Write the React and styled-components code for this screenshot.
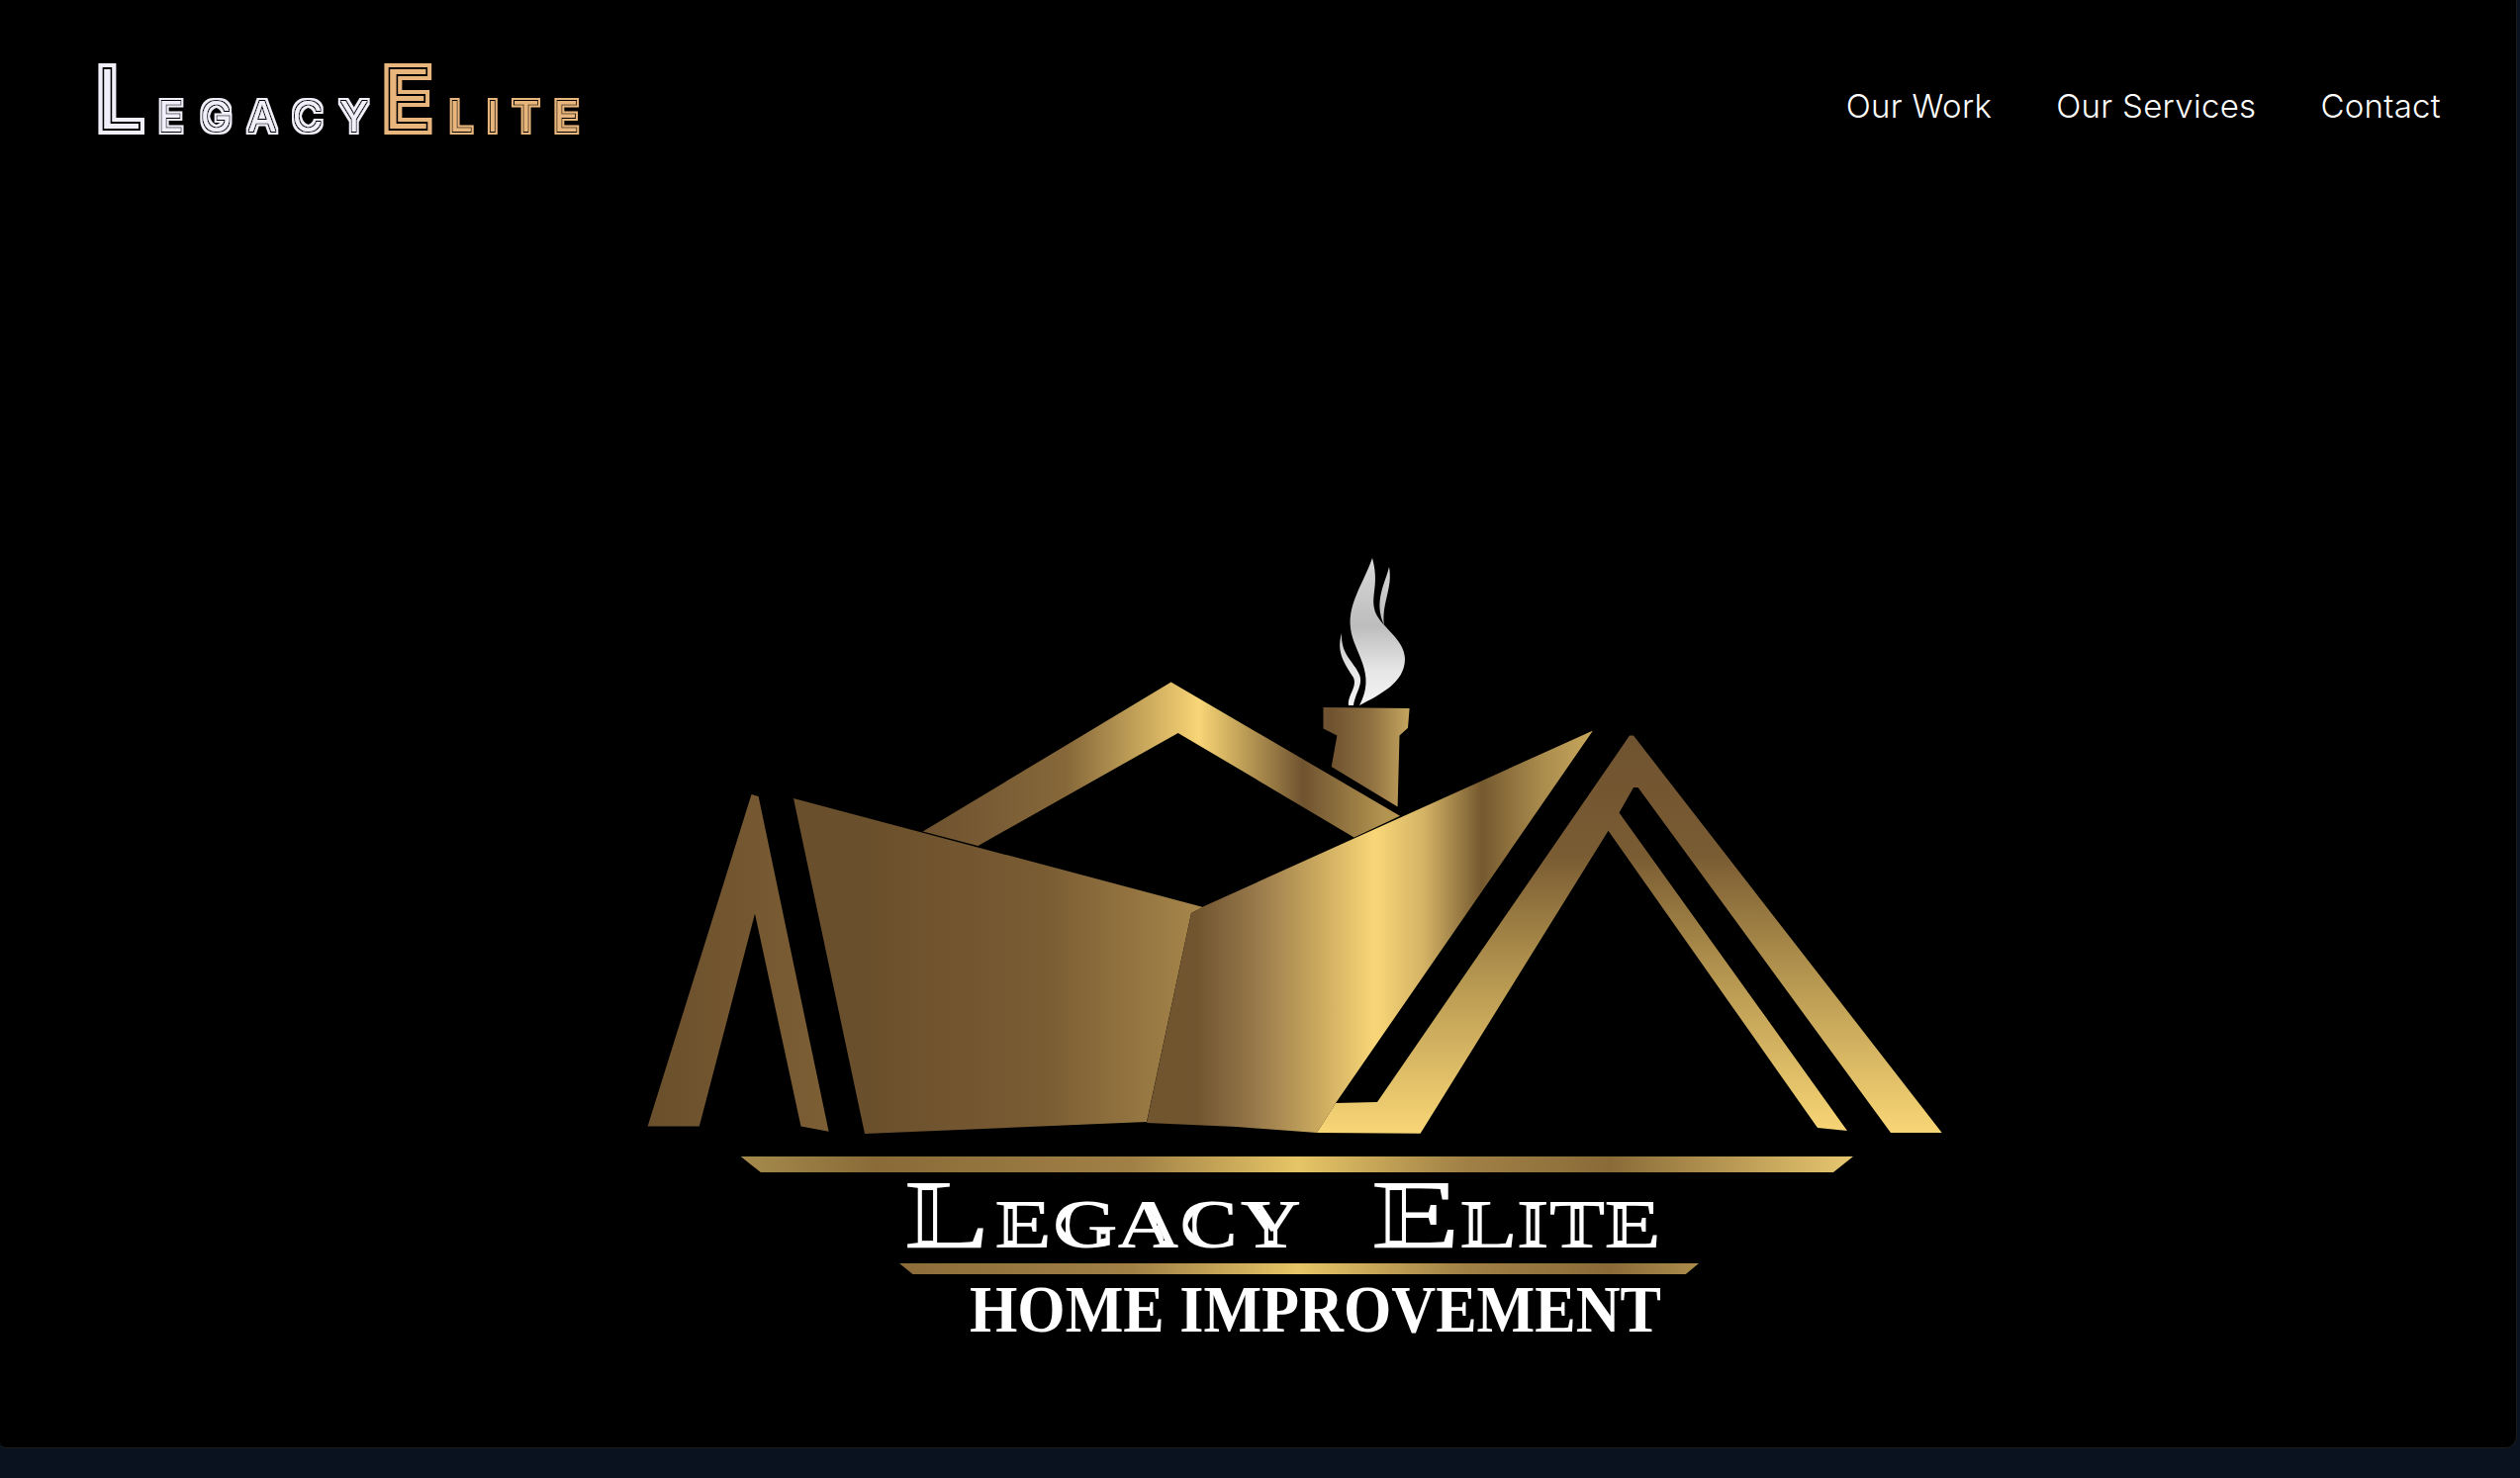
import styled, { createGlobalStyle } from "styled-components";

const GlobalStyle = createGlobalStyle`
  * { box-sizing: border-box; }
  html, body { margin: 0; padding: 0; background: #0a1220; }
`;

const Page = styled.div`
  width: 2547px;
  height: 1494px;
  overflow: hidden;
  background: #0a1220;
`;

const Hero = styled.section`
  width: 2544px;
  height: 1464px;
  background: #000;
  border-right: 1px solid #1c1c1c;
  border-bottom: 1px solid #1c1c1c;
  border-radius: 0 0 12px 6px;
  display: flex;
  flex-direction: column;
`;

const Header = styled.header`
  height: 160px;
  padding: 25px 76px 0 90px;
  display: flex;
  justify-content: space-between;
  align-items: flex-start;
`;

const Nav = styled.nav`
  display: flex;
  gap: 65px;
  padding-top: 58px;
`;

const NavLink = styled.a`
  font-family: Inter, "Noto Sans", sans-serif;
  font-weight: 300;
  font-size: 33px;
  line-height: 48px;
  letter-spacing: 0.3px;
  color: #fff;
  text-decoration: none;
`;

const BrandSvg = styled.svg`
  display: block;
  width: 510px;
  height: 120px;
`;

const Main = styled.main`
  padding: 390px 0 0 640px;
`;

const HouseSvg = styled.svg`
  display: block;
  width: 1340px;
  height: 820px;
`;

const BrandWord = styled.text`
  font-family: Inter, "Liberation Sans", sans-serif;
  font-weight: 400;
  font-size: ${(p) => p.$size}px;
  fill: ${(p) => p.$color};
`;

const LogoLine = styled.text`
  font-family: "Liberation Serif", serif;
  font-weight: 700;
  fill: #fff;
`;

function Stripes({ id, erode, outer, inner }) {
  return (
    <filter id={id} filterUnits="userSpaceOnUse" x="90" y="25" width="510" height="120">
      <feMorphology in="SourceGraphic" operator="erode" radius={erode} result="core" />
      <feMorphology in="core" operator="dilate" radius={outer} result="outer" />
      <feMorphology in="core" operator="dilate" radius={inner} result="innerShape" />
      <feFlood floodColor="#000" result="black" />
      <feComposite in="black" in2="innerShape" operator="in" result="gap" />
      <feMerge>
        <feMergeNode in="outer" />
        <feMergeNode in="gap" />
        <feMergeNode in="core" />
      </feMerge>
    </filter>
  );
}

function Brand() {
  return (
    <BrandSvg viewBox="90 25 510 120" aria-label="Legacy Elite">
      <defs>
        <Stripes id="stripeBig" erode={1} outer={6} inner={2} />
        <Stripes id="stripeSmall" erode={0} outer={3} inner={1} />
      </defs>
      <BrandWord x="97" y="130.7" $size={85} $color="#f1f0fa" filter="url(#stripeBig)">L</BrandWord>
      <BrandWord x="160" y="132.7" $size={42} $color="#f1f0fa" filter="url(#stripeSmall)" textLength="212" lengthAdjust="spacing">EGACY</BrandWord>
      <BrandWord x="386" y="130.7" $size={85} $color="#e8b67c" filter="url(#stripeBig)">E</BrandWord>
      <BrandWord x="454" y="132.7" $size={42} $color="#e8b67c" filter="url(#stripeSmall)" textLength="131" lengthAdjust="spacing">LITE</BrandWord>
    </BrandSvg>
  );
}

function Gradient({ id, x1, x2, y1 = 0, y2 = 0, stops }) {
  return (
    <linearGradient id={id} gradientUnits="userSpaceOnUse" x1={x1} x2={x2} y1={y1} y2={y2}>
      {stops.map(([at, color]) => (
        <stop key={at} offset={at} stopColor={color} />
      ))}
    </linearGradient>
  );
}

function House() {
  return (
    <HouseSvg viewBox="640 550 1340 820" aria-label="Legacy Elite Home Improvement">
      <defs>
        <Gradient id="leftPost" x1={654} x2={840} stops={[[0, "#6a4f2c"], [1, "#7d5f35"]]} />
        <Gradient id="leftWall" x1={870} x2={1205} stops={[[0, "#6a4f2c"], [0.55, "#7a5c33"], [1, "#a48449"]]} />
        <Gradient
          id="roofBand"
          x1={940}
          x2={1400}
          stops={[[0, "#6f5330"], [0.3, "#86683a"], [0.55, "#e8c56c"], [0.59, "#f8d577"], [0.67, "#c9a95c"], [0.82, "#6f5330"], [1, "#b49550"]]}
        />
        <Gradient
          id="rightWall"
          x1={1160}
          x2={1610}
          stops={[[0, "#70552f"], [0.11, "#705530"], [0.24, "#97784a"], [0.38, "#c9a85e"], [0.51, "#f9d778"], [0.62, "#d4b366"], [0.75, "#75592f"], [0.88, "#a88a4c"], [1, "#c8a85c"]]}
        />
        <Gradient id="rightRoof" x1={1650} x2={1650} y1={745} y2={1145} stops={[[0, "#6f5330"], [0.3, "#7a5c33"], [0.6, "#b4954f"], [1, "#f8d676"]]} />
        <Gradient id="chimney" x1={1345} x2={1425} stops={[[0, "#6f5330"], [0.5, "#8f7040"], [1, "#c6a65f"]]} />
        <Gradient id="bar" x1={750} x2={1875} stops={[[0, "#a58a4c"], [0.12, "#8a6b38"], [0.35, "#a08045"], [0.5, "#e6c566"], [0.65, "#a08045"], [0.78, "#8a6b38"], [1, "#e8c870"]]} />
        <Gradient id="smoke" x1={1380} x2={1380} y1={565} y2={715} stops={[[0, "#d8d8d8"], [0.45, "#bdbdbd"], [0.75, "#e6e6e6"], [1, "#f4f4f4"]]} />
        <filter id="inlineCut" filterUnits="userSpaceOnUse" x="900" y="1180" width="800" height="95">
          <feMorphology in="SourceAlpha" operator="erode" radius="4 7" result="slit" />
          <feFlood floodColor="#000" result="black" />
          <feComposite in="black" in2="slit" operator="in" result="cut" />
          <feMerge>
            <feMergeNode in="SourceGraphic" />
            <feMergeNode in="cut" />
          </feMerge>
        </filter>
      </defs>

      <polygon
        fill="url(#leftPost)"
        points="759.5,803 766.6,805 837.6,1143.8 809.5,1138.6 763,923.5 706.8,1138.6 654.6,1138.6"
      />
      <polygon fill="url(#leftWall)" points="802,807 1216,917 1204,923 1159,1134 874,1146" />
      <polygon
        fill="url(#roofBand)"
        points="932.7,840.5 1183.6,689.5 1415,824.7 1368.6,846.4 1190.7,740.9 988.5,855"
      />
      <polygon
        fill="url(#rightWall)"
        points="1217,916 1610,738.5 1350,1115 1331,1145 1250,1139 1159,1135 1204,923"
      />
      <polygon
        fill="url(#rightRoof)"
        points="1647,743.6 1651,743.6 1962.7,1145 1911,1145 1655.6,796 1651,796 1636.5,821.5 1867,1143 1837,1140 1625.5,839.7 1435.6,1145.7 1331,1145 1350,1115 1392,1114"
      />
      <polygon
        fill="url(#chimney)"
        points="1337.5,715 1424.6,716 1423,735.7 1414.5,743.6 1412.6,815.6 1345.7,775 1351.4,743.6 1337.5,736.5"
      />

      <path
        fill="url(#smoke)"
        d="M1387 564 C1378 590 1362 610 1365 635 C1368 660 1392 680 1374 713 C1395 702 1420 690 1420 666 C1420 645 1392 632 1389 615 C1386 600 1394 590 1387 564 Z"
      />
      <path fill="url(#smoke)" d="M1404 573 C1400 590 1388 608 1399 632 C1396 610 1408 595 1404 573 Z" />
      <path
        fill="url(#smoke)"
        d="M1356 640 C1350 660 1360 672 1368 685 C1372 695 1362 702 1363 713 L1368 713 C1370 700 1378 692 1374 682 C1368 668 1355 662 1356 640 Z"
      />

      <polygon fill="url(#bar)" points="748.7,1169 1873,1169 1853,1185 768.8,1185" />
      <polygon fill="url(#bar)" points="909,1277 1717,1277 1703.8,1288 922.5,1288" />

      <LogoLine y="1261" filter="url(#inlineCut)">
        <tspan x="915" fontSize="100" textLength="84" lengthAdjust="spacingAndGlyphs">L</tspan>
        <tspan x="1006" fontSize="70" textLength="327" lengthAdjust="spacingAndGlyphs">EGACY </tspan>
        <tspan x="1387" fontSize="100" textLength="89" lengthAdjust="spacingAndGlyphs">E</tspan>
        <tspan x="1476" fontSize="70" textLength="203" lengthAdjust="spacingAndGlyphs">LITE</tspan>
      </LogoLine>
      <LogoLine x="980" y="1346" fontSize="67" textLength="699" lengthAdjust="spacingAndGlyphs">
        HOME IMPROVEMENT
      </LogoLine>
    </HouseSvg>
  );
}

export default function App() {
  return (
    <Page>
      <GlobalStyle />
      <Hero>
        <Header>
          <Brand />
          <Nav>
            <NavLink href="#work">Our Work</NavLink>
            <NavLink href="#services">Our Services</NavLink>
            <NavLink href="#contact">Contact</NavLink>
          </Nav>
        </Header>
        <Main>
          <House />
        </Main>
      </Hero>
    </Page>
  );
}
